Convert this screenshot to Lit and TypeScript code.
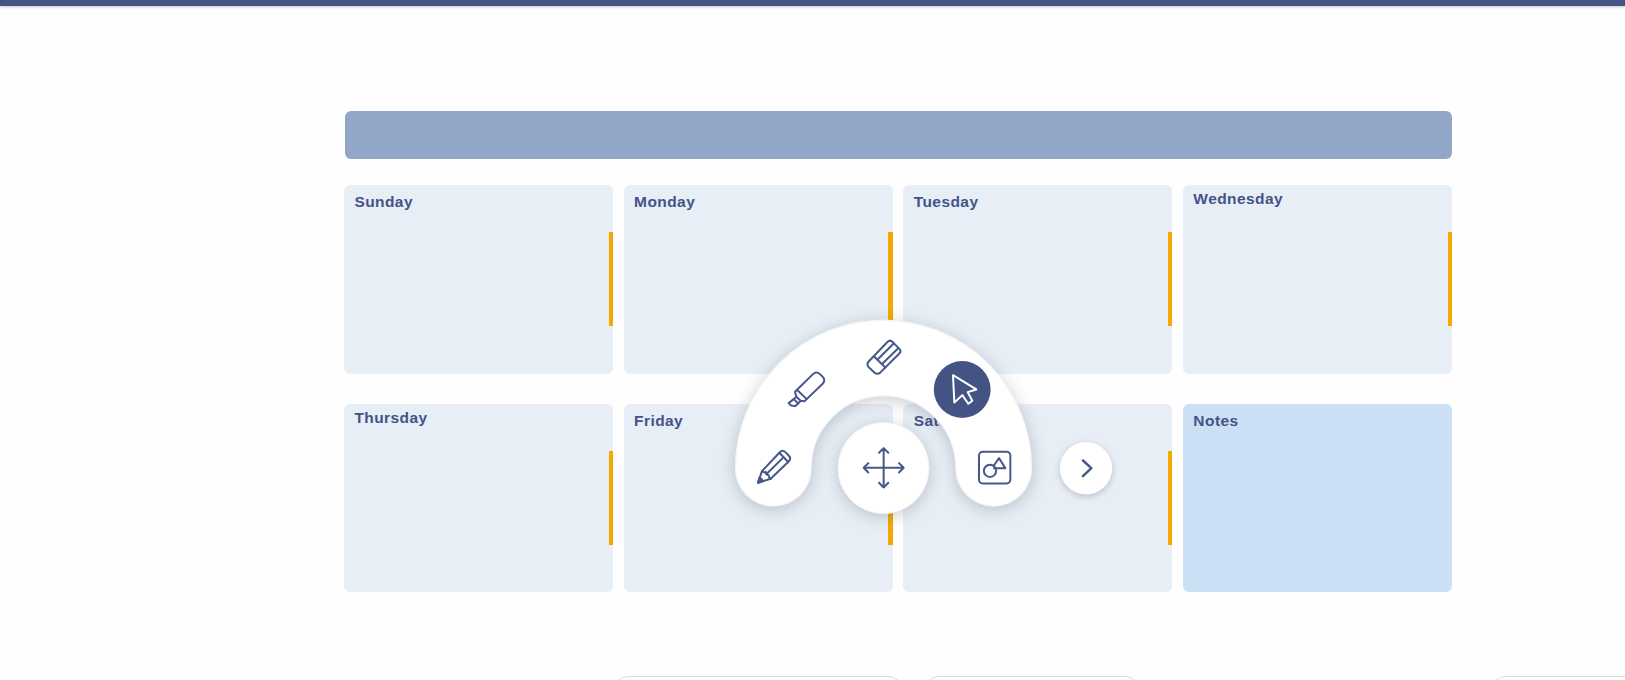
import { LitElement, html, css, svg } from "lit";
import { customElement, property } from "lit/decorators.js";

@customElement("day-card")
class DayCard extends LitElement {
  @property() label = "";
  @property({ type: Boolean, reflect: true }) notes = false;
  @property({ type: Boolean, reflect: true }) raised = false;

  static styles = css`
    :host {
      display: flex;
      justify-content: space-between;
      box-sizing: border-box;
      height: 188.6px;
      border-radius: 6px;
      background: #e7eef6;
      padding: 8px 0 0 10.4px;
      color: #435386;
      font: bold 15.5px/18px "Liberation Sans", Arial, sans-serif;
      letter-spacing: 0.43px;
    }
    :host([raised]) { padding-top: 5px; }
    :host([notes]) { background: #cbe0f4; }
    .marker {
      width: 4.4px;
      height: 93.7px;
      margin-top: 39.3px;
      background: #f3a900;
    }
    :host([raised]) .marker { margin-top: 42.3px; }
  `;

  render() {
    return html`<span>${this.label}</span>${this.notes ? "" : html`<span class="marker"></span>`}`;
  }
}

@customElement("tool-wheel")
class ToolWheel extends LitElement {
  static styles = css`
    :host { display: block; }
    svg { display: block; overflow: visible; }
    .shadow { filter: drop-shadow(0 3px 8px rgba(40, 45, 60, 0.24)); }
    .small-shadow { filter: drop-shadow(0 2px 3px rgba(40, 45, 60, 0.24)); }
    .ink { fill: none; stroke: #46578b; stroke-width: 6; stroke-linecap: round; stroke-linejoin: round; }
    .light { stroke: #fff; }
    .heavy { stroke-width: 7.5; }
    .solid { fill: #425384; }
  `;

  render() {
    const arc = "M773.3 468.3A110.2 110.2 0 0 1 993.7 468.3";
    return html`<svg width="440" height="230" viewBox="700 300 440 230">
      ${svg`
      <g class="shadow">
        <path d=${arc} fill="none" stroke="#f3f4f5" stroke-width="77" stroke-linecap="round"/>
        <path d=${arc} fill="none" stroke="#fff" stroke-width="74.4" stroke-linecap="round"/>
      </g>
      <circle class="shadow" cx="883.5" cy="468" r="45.6" fill="#fff"/>
      <circle cx="883.5" cy="468" r="45.6" fill="#fff" stroke="#f0f1f3"/>
      <circle class="small-shadow" cx="1086" cy="468.2" r="26.2" fill="#fff"/>
      <circle class="solid" cx="962.2" cy="389.5" r="28.4"/>
      <g transform="translate(720 309.8) scale(.33333)">
        <g class="ink">
          <path d="M114 519L126 484L178 429Q187 418 196 427L206 437Q215 446 206 455L152 507Z"/>
          <path d="M126 484Q131 489 137 486Q137 496 146 496Q146 504 152 507M141 491L191 442M178 429L204 456"/>
          <path d="M119 502L130 514L114 519Z" fill="#46578b"/>
        </g>
        <g class="ink">
          <path d="M231 240L279 193Q289 183 300 193L309 202Q317 212 308 222L260 268L231 240"/>
          <path d="M231 240L225 246L229 261L242 273L254 274L260 268M229 261L221 268L206 280L213 287L225 289L235 281L242 273M221 268L235 281"/>
        </g>
        <g class="ink">
          <path d="M446 155L503 96Q510 89 517 96L539 118Q545 124 538 131L482 187Q472 196 463 188L447 173Q438 164 446 155Z"/>
          <path d="M462 140L496 173M475 147L521 101M487 162L534 116"/>
        </g>
        <path class="ink" d="M491 415V533M431 474H551M477 429L491 415L505 429M477 519L491 533L505 519M445 460L431 474L445 488M537 460L551 474L537 488"/>
      </g>
      <g transform="translate(880 309.8) scale(.33333)">
        <path class="ink light" d="M219 196L289 239L263 247L277 273L265 282L247 256L223 278Z"/>
        <rect class="ink" x="297" y="426" width="94" height="95" rx="11"/>
        <circle class="ink" cx="330" cy="483" r="18.5"/>
        <path class="ink" d="M341 468L357 445L376 475H342"/>
        <path class="ink heavy" d="M609 452L634 475L609 499"/>
      </g>`}
    </svg>`;
  }
}

@customElement("app-root")
class AppRoot extends LitElement {
  static styles = css`
    :host {
      display: flex;
      flex-direction: column;
      position: relative;
      box-sizing: border-box;
      width: 1625px;
      height: 680px;
      overflow: hidden;
      background: #fefefe;
    }
    .top { flex: none; height: 6px; background: #425384; box-shadow: 0 1px 3px rgba(60, 40, 60, 0.28); }
    .planner { width: 1108px; margin: 104.6px 0 0 344px; }
    .title { height: 48.4px; margin-left: 0.7px; border-radius: 6px; background: #92a6c8; }
    .week {
      display: grid;
      grid-template-columns: repeat(4, 269px);
      column-gap: 10.67px;
      row-gap: 30.3px;
      margin-top: 26px;
    }
    .tabs { display: flex; margin: 83.2px 0 0 613px; }
    .tab { box-sizing: border-box; flex: none; height: 50px; border: 1px solid #d9d9d9; border-radius: 15px; background: #fff; }
    .wide { width: 290px; }
    .mid { width: 216px; margin-left: 21px; }
    .end { width: 216px; margin-left: 351px; }
    .wheel { position: absolute; left: 700px; top: 300px; }
  `;

  render() {
    const days = ["Sunday", "Monday", "Tuesday", "Wednesday", "Thursday", "Friday", "Saturday", "Notes"];
    return html`
      <div class="top"></div>
      <main class="planner">
        <div class="title"></div>
        <section class="week">
          ${days.map((d) => html`<day-card .label=${d} ?notes=${d === "Notes"} ?raised=${d === "Wednesday" || d === "Thursday"}></day-card>`)}
        </section>
      </main>
      <div class="tabs">
        <div class="tab wide"></div>
        <div class="tab mid"></div>
        <div class="tab end"></div>
      </div>
      <tool-wheel class="wheel"></tool-wheel>
    `;
  }
}
